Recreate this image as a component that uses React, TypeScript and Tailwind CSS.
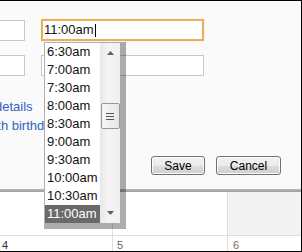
import React from "react";

const times = ["6:30am", "7:00am", "7:30am", "8:00am", "8:30am", "9:00am", "9:30am", "10:00am", "10:30am", "11:00am"];

function Btn({ label, w }: { label: string; w: string }) {
  return (
    <div
      className={`${w} h-[19px] rounded-[3px] border border-[#707070] bg-[linear-gradient(#f2f2f2_0%,#ebebeb_50%,#dddddd_51%,#cfcfcf_100%)] shadow-[inset_0_0_0_1px_#fcfcfc] flex items-center justify-center text-[12px] leading-none text-black`}
    >
      {label}
    </div>
  );
}

export default function App() {
  return (
    <div className="w-[302px] h-[252px] overflow-hidden relative border-t border-r border-b border-black bg-white font-['Liberation_Sans',Arial,sans-serif]">
      <div className="h-[188px] bg-[#fafafa] flex flex-col">
        <div className="mt-[18px] flex items-start">
          <div className="-ml-[16px] mt-[1px] w-[41px] h-[21px] border border-[#c8c8c8] bg-white" />
          <div className="ml-[16px] w-[163px] h-[22px] border-2 border-[#e6b05a] shadow-[0_0_1px_#f0c880] bg-white flex items-center pl-[1px] text-[13px] text-[#111]">
            <span>11:00am</span>
            <span className="ml-[1px] w-px h-[13px] bg-black" />
          </div>
        </div>
        <div className="mt-[14px] flex items-start">
          <div className="-ml-[16px] w-[41px] h-[21px] border border-[#c8c8c8] bg-white" />
          <div className="ml-[16px] w-[163px] h-[21px] border border-[#c8c8c8] bg-white" />
        </div>
        <div className="mt-[21px] -ml-[5px] text-[13px] leading-[19px] text-[#2f63c4]">details</div>
        <div className="-ml-[15px] text-[13px] leading-[19px] text-[#2f63c4] whitespace-nowrap">with birthdays</div>
        <div className="mt-[21px] flex justify-end pr-[20px] gap-[11px]">
          <Btn label="Save" w="w-[54px]" />
          <Btn label="Cancel" w="w-[65px]" />
        </div>
      </div>
      <div className="h-[3px] bg-[linear-gradient(#b8b8b8,#a0a0a0)]" />
      <div className="flex h-[59px]">
        <div className="w-[113px] border-r border-[#dedede] flex flex-col">
          <div className="h-[48px] border-b border-[#dedede]" />
          <div className="pt-[3px] pl-[2px] text-[11px] leading-[12px] text-[#333]">4</div>
        </div>
        <div className="w-[115px] border-r border-[#dedede] flex flex-col">
          <div className="h-[48px] border-b border-[#dedede]" />
          <div className="pt-[3px] pl-[4px] text-[11px] leading-[12px] text-[#666]">5</div>
        </div>
        <div className="flex-1 flex flex-col">
          <div className="h-[48px] border-b border-[#dedede] bg-[#f3f3f3]" />
          <div className="pt-[3px] pl-[5px] text-[11px] leading-[12px] text-[#8a6a4a]">6</div>
        </div>
      </div>

      <div className="absolute left-[44px] top-[41px] w-[76px] h-[181px] flex bg-white border-l border-t border-[#b0b0b0] shadow-[3px_3px_0_3px_rgba(0,0,0,0.32)]">
        <div className="w-[55px] flex flex-col">
          {times.map((t) => (
            <div
              key={t}
              className={`h-[18px] leading-[18px] pl-[2px] text-[13px] whitespace-nowrap ${t === "11:00am" ? "bg-[#6a6a6a] text-white" : "text-[#111]"}`}
            >
              {t}
            </div>
          ))}
        </div>
        <div className="flex-1 bg-[linear-gradient(90deg,#e8e8e8,#f4f4f4_40%,#f0f0f0)] flex flex-col items-center">
          <div className="h-[19px] w-full flex items-center justify-center">
            <svg width="7" height="4" viewBox="0 0 7 4"><path d="M3.5 0L7 4H0z" fill="#606060" /></svg>
          </div>
          <div className="mt-[41px] w-[19px] h-[26px] rounded-[2px] border border-[#979797] bg-[linear-gradient(90deg,#f6f6f6,#e6e6e6)] flex flex-col items-center justify-center gap-[2px]">
            <div className="w-[8px] h-px bg-[#555]" />
            <div className="w-[8px] h-px bg-[#555]" />
            <div className="w-[8px] h-px bg-[#555]" />
          </div>
          <div className="flex-1" />
          <div className="h-[20px] w-full flex items-center justify-center">
            <svg width="7" height="4" viewBox="0 0 7 4"><path d="M0 0H7L3.5 4z" fill="#606060" /></svg>
          </div>
        </div>
      </div>
    </div>
  );
}
